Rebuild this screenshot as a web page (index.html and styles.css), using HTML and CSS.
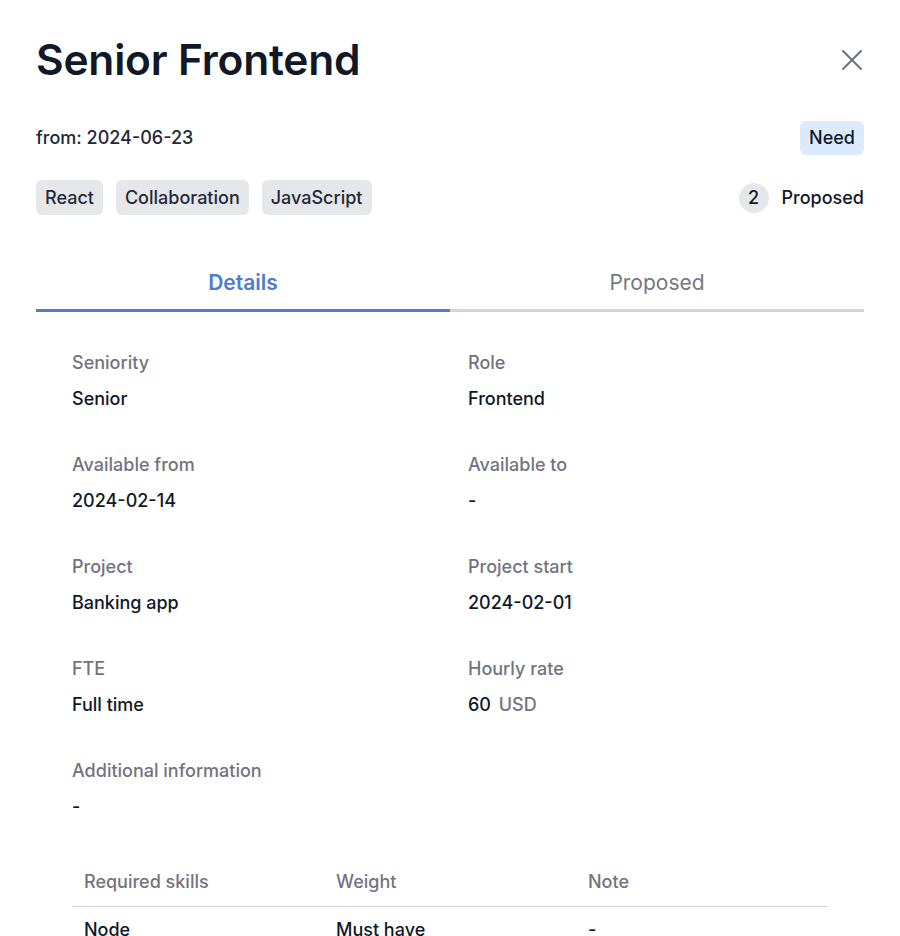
FILE: index.html
```html
<!DOCTYPE html>
<html lang="en">
<head>
<meta charset="utf-8">
<title>Senior Frontend</title>
<link rel="stylesheet" href="styles.css">
</head>
<body>
<div class="panel">
  <header class="head">
    <h1 class="title">Senior Frontend</h1>
    <button class="close" aria-label="Close">
      <svg width="24" height="24" viewBox="0 0 24 24" fill="none" stroke="currentColor" stroke-width="2" stroke-linecap="round"><path d="M3 3L21 21M21 3L3 21"/></svg>
    </button>
  </header>
  <div class="meta">
    <span class="from">from: 2024-06-23</span>
    <span class="badge">Need</span>
  </div>
  <div class="meta2">
    <div class="tags">
      <span class="tag">React</span>
      <span class="tag">Collaboration</span>
      <span class="tag">JavaScript</span>
    </div>
    <div class="proposed"><span class="count">2</span><span>Proposed</span></div>
  </div>
  <nav class="tabs">
    <div class="tab active">Details</div>
    <div class="tab">Proposed</div>
  </nav>
  <section class="details">
    <div class="field"><div class="label">Seniority</div><div class="value">Senior</div></div>
    <div class="field"><div class="label">Role</div><div class="value">Frontend</div></div>
    <div class="field"><div class="label">Available from</div><div class="value">2024-02-14</div></div>
    <div class="field"><div class="label">Available to</div><div class="value">-</div></div>
    <div class="field"><div class="label">Project</div><div class="value">Banking app</div></div>
    <div class="field"><div class="label">Project start</div><div class="value">2024-02-01</div></div>
    <div class="field"><div class="label">FTE</div><div class="value">Full time</div></div>
    <div class="field"><div class="label">Hourly rate</div><div class="value">60 <span class="unit">USD</span></div></div>
    <div class="field"><div class="label">Additional information</div><div class="value">-</div></div>
  </section>
  <table class="skills">
    <thead>
      <tr><th>Required skills</th><th>Weight</th><th>Note</th></tr>
    </thead>
    <tbody>
      <tr><td>Node</td><td>Must have</td><td>-</td></tr>
    </tbody>
  </table>
</div>
</body>
</html>
```
FILE: styles.css
```css
* { box-sizing: border-box; }
html, body { margin: 0; padding: 0; background: #ffffff; }
body {
  font-family: Inter, "Noto Sans", sans-serif;
  color: #111827;
  font-size: 18px;
  line-height: 24px;
}
.panel {
  padding: 36px 36px 24px 36px;
}
.head {
  display: flex;
  justify-content: space-between;
  align-items: center;
  height: 48px;
}
.title {
  margin: 0;
  font-size: 42.5px;
  line-height: 48px;
  font-weight: 600;
  color: #111827;
  letter-spacing: -0.2px;
}
.close {
  border: 0;
  background: none;
  padding: 0;
  color: #6b7280;
  width: 24px;
  height: 24px;
  display: flex;
  align-items: center;
  justify-content: center;
}
.meta {
  margin-top: 37px;
  display: flex;
  justify-content: space-between;
  align-items: center;
  height: 34px;
}
.from { color: #1f2937; font-weight: 500; }
.badge {
  background: #dbeafe;
  border-radius: 6px;
  padding: 5px 9px;
  font-weight: 500;
  color: #111827;
}
.meta2 {
  margin-top: 25px;
  display: flex;
  justify-content: space-between;
  align-items: center;
  height: 35px;
}
.tags { display: flex; gap: 13px; }
.tag {
  background: #e5e7eb;
  border-radius: 6px;
  padding: 0 9px;
  height: 35px;
  display: flex;
  align-items: center;
  font-weight: 500;
  color: #1f2937;
}
.proposed {
  display: flex;
  align-items: center;
  gap: 13px;
  font-weight: 500;
  color: #111827;
}
.count {
  width: 30px;
  height: 30px;
  border-radius: 50%;
  background: #e5e7eb;
  display: flex;
  align-items: center;
  justify-content: center;
}
.tabs {
  margin-top: 38px;
  display: flex;
}
.tab {
  flex: 1;
  text-align: center;
  font-size: 21px;
  line-height: 24px;
  padding: 18px 0 14px;
  color: #777780;
  border-bottom: 3px solid #d4d4d8;
  font-weight: 400;
}
.tab.active {
  color: #4f7bd0;
  border-bottom-color: #4f7bd0;
  font-weight: 600;
}
.details {
  padding: 39px 36px 0;
  display: grid;
  grid-template-columns: 1fr 1fr;
  column-gap: 36px;
  row-gap: 42px;
}
.field { display: flex; flex-direction: column; gap: 12px; }
.label { color: #737380; font-weight: 500; }
.value { color: #111827; font-weight: 500; }
.unit { color: #737380; margin-left: 3px; }
.skills {
  margin: 39px 36px 0;
  width: calc(100% - 72px);
  border-collapse: collapse;
  table-layout: fixed;
}
.skills th {
  text-align: left;
  font-weight: 500;
  color: #737380;
  padding: 12px 12px;
  border-bottom: 1px solid #d1d5db;
}
.skills td {
  padding: 11px 12px;
  color: #111827;
  font-weight: 500;
}
```
